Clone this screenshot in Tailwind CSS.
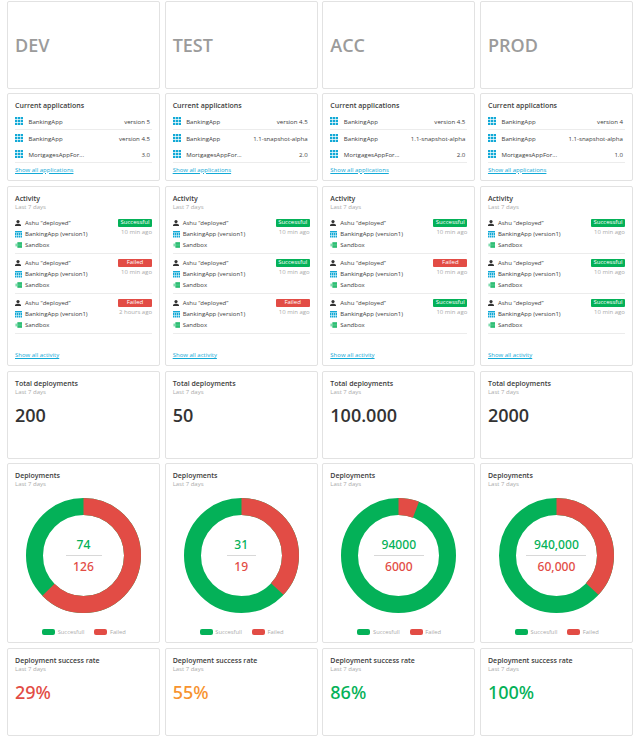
<!DOCTYPE html>
<html lang="en">
<head>
<meta charset="utf-8">
<title>Deployments dashboard</title>
<script src="https://cdn.jsdelivr.net/npm/@tailwindcss/browser@4"></script>
</head>
<body class="bg-white font-['Open_Sans','Noto_Sans',sans-serif] text-[#3c3c3c]">
<svg class="hidden">
  <symbol id="grid" viewBox="0 0 8 8"><path fill="#12a9d6" d="M0 0h2.3v2.2H0zM2.9 0h2.3v2.2H2.9zM5.8 0H8v2.2H5.8zM0 2.9h2.3v2.2H0zM2.9 2.9h2.3v2.2H2.9zM5.8 2.9H8v2.2H5.8zM0 5.8h2.3V8H0zM2.9 5.8h2.3V8H2.9zM5.8 5.8H8V8H5.8z"/></symbol>
  <symbol id="app" viewBox="0 0 7 7"><path fill="#12a9d6" d="M0 0h7v1.4H0zM0 2h1.4v2H0zM1.9 2h1.4v2H1.9zM3.8 2h1.4v2H3.8zM5.7 2H7v2H5.7zM0 4.6h1.4v2H0zM1.9 4.6h1.4v2H1.9zM3.8 4.6h1.4v2H3.8zM5.7 4.6H7v2H5.7z"/></symbol>
  <symbol id="user" viewBox="0 0 6 6"><circle cx="3" cy="1.6" r="1.6" fill="#333"/><path fill="#333" d="M0 6V5.2C0 4.2 1.6 3.7 3 3.7s3 .5 3 1.5V6z"/></symbol>
  <symbol id="box" viewBox="0 0 7 6"><path fill="#04b158" d="M2.4.3H7v5.4H2.4z"/><path fill="#7fdcae" d="M.4 1.6h2v2.8h-2z"/><path stroke="#d5f3e3" stroke-width=".5" d="M3 2.1h4M3 3.9h4"/></symbol>
</svg>
<main id="board" class="grid w-[633px] grid-cols-[repeat(4,153px)] justify-between pt-px pl-[7px]"></main>
<script>
const card = 'rounded-[2px] border border-[#e2e2e2] px-[7px]';
const title = 'h-[9px] text-[7px] leading-[9px] font-semibold whitespace-nowrap';
const sub = 'h-[9px] text-[6px] leading-[9px] text-[#aaaaaa] whitespace-nowrap';
const link = 'block text-[6px] leading-[9px] text-[#12a9d6] underline whitespace-nowrap';
const envs = [
  {name:'DEV', v:['version 5','version 4.5','3.0'], a:[1,0,0], t:'2 hours ago', total:'200', ok:'74', bad:'126', pct:62.7, line:'w-[36px]', rate:'29%', color:'text-[#e24c45]'},
  {name:'TEST', v:['version 4.5','1.1-snapshot-alpha','2.0'], a:[1,1,0], t:'10 min ago', total:'50', ok:'31', bad:'19', pct:37, line:'w-[29px]', rate:'55%', color:'text-[#f7932f]'},
  {name:'ACC', v:['version 4.5','1.1-snapshot-alpha','2.0'], a:[1,0,1], t:'10 min ago', total:'100.000', ok:'94000', bad:'6000', pct:5.8, line:'w-[50px]', rate:'86%', color:'text-[#04b158]'},
  {name:'PROD', v:['version 4','1.1-snapshot-alpha','1.0'], a:[1,1,1], t:'10 min ago', total:'2000', ok:'940,000', bad:'60,000', pct:37, line:'w-[60px]', rate:'100%', color:'text-[#04b158]'}
];
const apps = ['BankingApp','BankingApp','MortgagesAppFor...'];
const column = e => `<div class="flex flex-col">
  <section class="${card} flex h-[88px] items-center text-[18px] font-semibold text-[#9b9b9b]">${e.name}</section>
  <section class="${card} mt-[4px] h-[88px] pt-[7px]">
    <h2 class="${title}">Current applications</h2>
    <div class="mt-[3px]">${apps.map((n,i)=>`<div class="flex h-[16.5px] w-[137px] items-center border-b ${i===1?'border-transparent':'border-[#ececec]'} pt-[2px] pr-[2px] text-[6.1px]"><svg class="-mt-px h-[8px] w-[8px]"><use href="#grid"/></svg><span class="ml-[5.5px]">${n}</span><span class="ml-auto">${e.v[i]}</span></div>`).join('')}</div>
    <a class="${link} mt-[3px]">Show all applications</a>
  </section>
  <section class="${card} mt-[5px] h-[180px] pt-[7px]">
    <h2 class="${title}">Activity</h2><p class="${sub}">Last 7 days</p>
    <div class="mt-[2px]">${e.a.map((s,i)=>`<div class="flex h-[40px] w-[137px] justify-between border-b border-[#ececec] pt-[4px] text-[6px]">
      <div class="leading-[11px]">
        <div class="flex h-[11px] items-center"><svg class="-mt-px mr-[4px] h-[6px] w-[6px]"><use href="#user"/></svg>Ashu “deployed”</div>
        <div class="flex h-[11px] items-center"><svg class="-mt-px mr-[3px] h-[7px] w-[7px]"><use href="#app"/></svg>BankingApp (version1)</div>
        <div class="flex h-[11px] items-center"><svg class="-mt-px mr-[3px] h-[6px] w-[7px]"><use href="#box"/></svg>Sandbox</div>
      </div>
      <div class="text-right text-[#aaaaaa]"><div class="mt-[1px] h-[8px] w-[34px] rounded-[1px] text-center leading-[7px] text-white ${s?'bg-[#04b158]':'bg-[#e24c45]'}">${s?'Successful':'Failed'}</div><div class="h-[9px] leading-[10px]">${i===2?e.t:'10 min ago'}</div></div>
    </div>`).join('')}</div>
    <a class="${link} mt-[17px]">Show all activity</a>
  </section>
  <section class="${card} mt-[5px] h-[88px] pt-[7px]">
    <h2 class="${title}">Total deployments</h2><p class="${sub}">Last 7 days</p>
    <div class="mt-[6px] text-[18px] leading-[24px] font-semibold text-[#333333]">${e.total}</div>
  </section>
  <section class="${card} mt-[4px] h-[180px] pt-[7px]">
    <h2 class="${title}">Deployments</h2><p class="${sub}">Last 7 days</p>
    <div class="mt-[8px] grid place-items-center">
      <svg class="col-start-1 row-start-1 h-[117px] w-[117px] -rotate-90" viewBox="0 0 117 117" fill="none" stroke-width="17"><circle cx="58.5" cy="58.5" r="49" stroke="#04b158"/><circle cx="58.5" cy="58.5" r="49" stroke="#e24c45" pathLength="100" stroke-dasharray="${e.pct} 100"/></svg>
      <div class="col-start-1 row-start-1 flex flex-col items-center font-['Noto_Sans',sans-serif] text-[12.1px] leading-[20px] font-medium"><span class="text-[#04b158]">${e.ok}</span><span class="${e.line} h-px bg-[#d8d8d8]"></span><span class="pt-px text-[#e24c45]">${e.bad}</span></div>
    </div>
    <div class="mt-[13px] flex h-[10px] items-center justify-center text-[5.8px] leading-[10px] text-[#aaaaaa]"><i class="mr-[2.5px] ml-[1px] h-[6px] w-[13px] rounded-[2px] bg-[#04b158]"></i>Succesfull<i class="mr-[2.5px] ml-[10px] h-[6px] w-[13px] rounded-[2px] bg-[#e24c45]"></i>Failed</div>
  </section>
  <section class="${card} mt-[5px] h-[88px] pt-[7px]">
    <h2 class="${title}">Deployment success rate</h2><p class="${sub}">Last 7 days</p>
    <div class="mt-[6px] font-['Noto_Sans',sans-serif] text-[18px] leading-[24px] font-medium ${e.color}">${e.rate}</div>
  </section>
</div>`;
document.getElementById('board').innerHTML = envs.map(column).join('');
</script>
</body>
</html>
